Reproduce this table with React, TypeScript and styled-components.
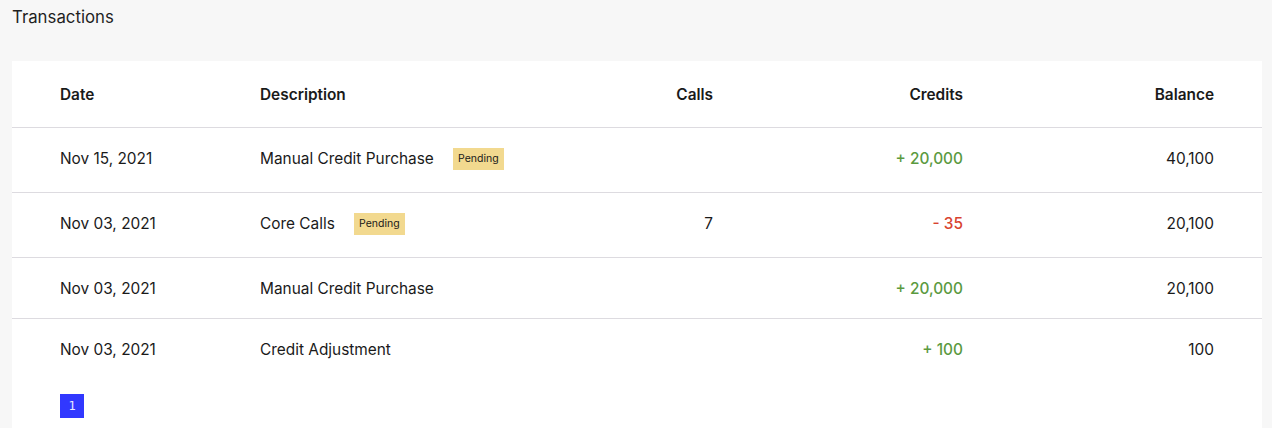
import React from "react";
import styled, { createGlobalStyle } from "styled-components";

const Global = createGlobalStyle`
  html, body { margin: 0; padding: 0; background: #f7f7f7; }
  body { font-family: Inter, "Noto Sans", sans-serif; color: #1a1a1a; -webkit-font-smoothing: antialiased; }
`;

const Page = styled.div`
  padding: 6px 10px 0 12px;
`;

const Title = styled.h1`
  margin: 0;
  font-size: 16.8px;
  font-weight: 400;
  line-height: 22px;
  color: #1f1f1f;
`;

const Card = styled.div`
  margin-top: 33px;
  background: #fff;
  padding: 0 48px 24px 48px;
`;

const Row = styled.div<{ $head?: boolean; $tall?: boolean; $last?: boolean }>`
  display: grid;
  grid-template-columns: 200px minmax(0, 1fr) 250px 250px 251px;
  align-items: start;
  margin: 0 -48px;
  padding: ${(p) => (p.$head ? "24px 48px 22px" : p.$tall ? "21px 48px 23px" : "21px 48px 19px")};
  border-bottom: ${(p) => (p.$last ? "none" : "1px solid #dddbe0")};
  font-size: 15.4px;
  line-height: 20px;
  font-weight: ${(p) => (p.$head ? 600 : 400)};
`;

const Cell = styled.div<{ $right?: boolean; $tone?: "pos" | "neg" }>`
  display: flex;
  align-items: center;
  white-space: nowrap;
  min-width: 0;
  justify-content: ${(p) => (p.$right ? "flex-end" : "flex-start")};
  color: ${(p) => (p.$tone === "pos" ? "#5b9a3f" : p.$tone === "neg" ? "#d8432f" : "#1a1a1a")};
  font-weight: ${(p) => (p.$tone ? 500 : "inherit")};
  height: 20px;
`;

const Badge = styled.span`
  display: inline-flex;
  flex-shrink: 0;
  align-items: center;
  justify-content: center;
  margin-left: 19px;
  height: 22px;
  width: 51px;
  background: #f2d98f;
  font-size: 10.5px;
  font-weight: 400;
  color: #1a1a1a;
`;

const Pager = styled.div`
  display: flex;
  padding-top: 15px;
`;

const PageButton = styled.button`
  width: 24px;
  height: 24px;
  border: none;
  padding: 0;
  background: #3138ff;
  color: #e8e8ff;
  font-family: "DejaVu Sans Mono", monospace;
  font-size: 12px;
`;

type Tx = {
  date: string;
  desc: string;
  pending?: boolean;
  calls?: string;
  credits: string;
  tone: "pos" | "neg";
  balance: string;
};

const rows: Tx[] = [
  { date: "Nov 15, 2021", desc: "Manual Credit Purchase", pending: true, credits: "+ 20,000", tone: "pos", balance: "40,100" },
  { date: "Nov 03, 2021", desc: "Core Calls", pending: true, calls: "7", credits: "- 35", tone: "neg", balance: "20,100" },
  { date: "Nov 03, 2021", desc: "Manual Credit Purchase", credits: "+ 20,000", tone: "pos", balance: "20,100" },
  { date: "Nov 03, 2021", desc: "Credit Adjustment", credits: "+ 100", tone: "pos", balance: "100" },
];

export default function App() {
  return (
    <>
      <Global />
      <Page>
        <Title>Transactions</Title>
        <Card>
          <Row $head>
            <Cell>Date</Cell>
            <Cell>Description</Cell>
            <Cell $right>Calls</Cell>
            <Cell $right>Credits</Cell>
            <Cell $right>Balance</Cell>
          </Row>
          {rows.map((r, i) => (
            <Row key={i} $tall={r.pending} $last={i === rows.length - 1}>
              <Cell>{r.date}</Cell>
              <Cell>
                {r.desc}
                {r.pending && <Badge>Pending</Badge>}
              </Cell>
              <Cell $right>{r.calls ?? ""}</Cell>
              <Cell $right $tone={r.tone}>{r.credits}</Cell>
              <Cell $right>{r.balance}</Cell>
            </Row>
          ))}
          <Pager>
            <PageButton>1</PageButton>
          </Pager>
        </Card>
      </Page>
    </>
  );
}
